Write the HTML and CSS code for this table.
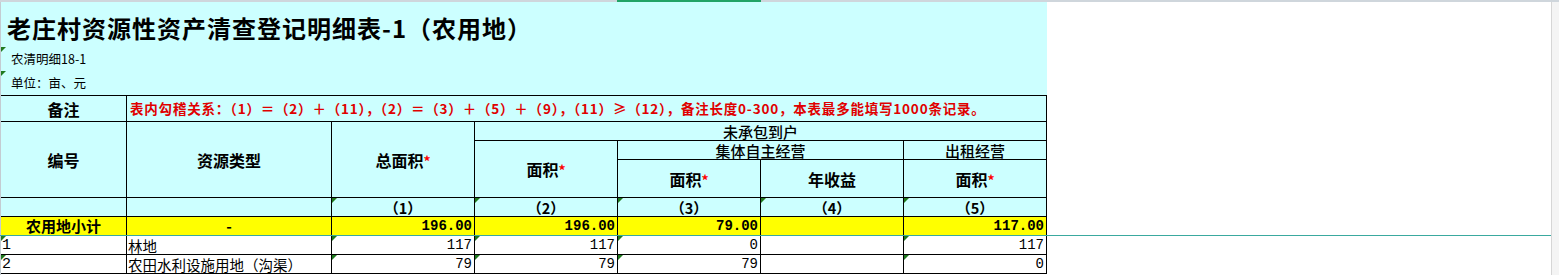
FILE: index.html
```html
<!DOCTYPE html>
<html lang="zh-CN">
<head>
<meta charset="utf-8">
<title>老庄村资源性资产清查登记明细表</title>
<link rel="stylesheet" href="styles.css">
</head>
<body>
<div class="screen">
  <div class="colbar"><div class="colbar-sel"></div></div>
  <div class="main">
    <div class="sheet">
      <div class="titles">
        <div class="row-title">老庄村资源性资产清查登记明细表-1（农用地）</div>
        <div class="row-sub mark">农清明细18-1</div>
        <div class="row-unit mark">单位：亩、元</div>
      </div>
      <table class="grid">
        <colgroup>
          <col class="w0"><col class="w1"><col class="w2"><col class="w2"><col class="w2"><col class="w2"><col class="w2">
        </colgroup>
        <tbody>
          <tr class="r-note">
            <td class="hd lbl">备注</td>
            <td class="hd note-text" colspan="6">表内勾稽关系：（1）＝（2）＋（11），（2）＝（3）＋（5）＋（9），（11）≥（12），备注长度0-300，本表最多能填写1000条记录。</td>
          </tr>
          <tr class="r-a">
            <td class="hd lbl" rowspan="3">编号</td>
            <td class="hd lbl" rowspan="3">资源类型</td>
            <td class="hd lbl" rowspan="3">总面积<span class="star">*</span></td>
            <td class="hd lbl thin" colspan="4">未承包到户</td>
          </tr>
          <tr class="r-b">
            <td class="hd lbl" rowspan="2">面积<span class="star">*</span></td>
            <td class="hd lbl thin" colspan="2">集体自主经营</td>
            <td class="hd lbl thin">出租经营</td>
          </tr>
          <tr class="r-c">
            <td class="hd lbl">面积<span class="star">*</span></td>
            <td class="hd lbl">年收益</td>
            <td class="hd lbl">面积<span class="star">*</span></td>
          </tr>
          <tr class="r-n">
            <td class="hd"></td>
            <td class="hd"></td>
            <td class="hd lbl idx tri">（1）</td>
            <td class="hd lbl idx tri">（2）</td>
            <td class="hd lbl idx tri">（3）</td>
            <td class="hd lbl idx tri">（4）</td>
            <td class="hd lbl idx tri">（5）</td>
          </tr>
          <tr class="r-sum">
            <td class="sum lbl">农用地小计</td>
            <td class="sum lbl">-</td>
            <td class="sum num">196.00</td>
            <td class="sum num">196.00</td>
            <td class="sum num">79.00</td>
            <td class="sum num"></td>
            <td class="sum num">117.00</td>
          </tr>
          <tr class="r-d">
            <td class="cell code tri">1</td>
            <td class="cell txt">林地</td>
            <td class="cell val tri">117</td>
            <td class="cell val tri">117</td>
            <td class="cell val tri">0</td>
            <td class="cell val"></td>
            <td class="cell val tri">117</td>
          </tr>
          <tr class="r-d">
            <td class="cell code tri">2</td>
            <td class="cell txt">农田水利设施用地（沟渠）</td>
            <td class="cell val tri">79</td>
            <td class="cell val tri">79</td>
            <td class="cell val tri">79</td>
            <td class="cell val"></td>
            <td class="cell val tri">0</td>
          </tr>
        </tbody>
      </table>
    </div>
    <div class="scrollbar"></div>
  </div>
  <div class="freeze-line"></div>
</div>
</body>
</html>
```

FILE: styles.css
```css
* { box-sizing: border-box; }
html, body { margin: 0; padding: 0; background: #ffffff; }
body {
  font-family: "Noto Sans CJK SC", "Noto Sans", sans-serif;
  color: #000;
}
.screen {
  width: 1559px;
  height: 275px;
  overflow: hidden;
  position: relative;
}
.colbar {
  height: 2px;
  background: #cfd6dc;
  display: flex;
}
.colbar-sel {
  margin-left: 617px;
  width: 144px;
  background: #21a366;
}
.main {
  display: flex;
  height: 273px;
}
.sheet {
  width: 1551px;
  border-left: 1px solid #c4ccd2;
}
.scrollbar {
  width: 8px;
  background: #f4f4f4;
  border-left: 1px solid #d6d6d6;
}
.titles {
  width: 1046px;
  height: 93px;
  background: #ccffff;
  display: flex;
  flex-direction: column;
}
.row-title {
  height: 45px;
  font-size: 24px;
  font-weight: 700;
  letter-spacing: 1px;
  padding-left: 6px;
  padding-top: 5px;
  display: flex;
  align-items: center;
  white-space: nowrap;
}
.row-sub, .row-unit {
  height: 24px;
  font-size: 12.5px;
  padding-left: 10px;
  padding-bottom: 3px;
  display: flex;
  align-items: flex-end;
  position: relative;
}
.mark::before, .tri::before {
  content: "";
  position: absolute;
  left: 0;
  top: 0;
  border-top: 5px solid #1f7a1f;
  border-right: 5px solid transparent;
}
.grid {
  border-collapse: separate;
  border-spacing: 0;
  table-layout: fixed;
  width: 1046px;
}
.w0 { width: 126px; }
.w1 { width: 205px; }
.w2 { width: 143px; }
.grid td {
  border-right: 1px solid #000;
  border-bottom: 1px solid #000;
  padding: 0;
  line-height: 1;
  white-space: nowrap;
  overflow: hidden;
  position: relative;
}
.r-note td { border-top: 1px solid #000; }
.r-note { height: 27px; }
.r-a { height: 19px; }
.r-b { height: 19px; }
.r-c { height: 38px; }
.r-n { height: 19px; }
.r-sum { height: 19px; }
.r-d { height: 19px; }
.hd { background: #ccffff; }
.lbl {
  text-align: center;
  font-weight: 700;
  font-size: 16px;
}
.grid td.thin {
  font-weight: 500;
  font-size: 15px;
  line-height: 17px;
}
.grid td.idx {
  font-size: 14.5px;
  line-height: 17px;
}
.star { color: #ff0000; font-size: 14px; }
.note-text {
  color: #e00000;
  font-weight: 700;
  font-size: 13.5px;
  letter-spacing: 0.8px;
  padding-left: 3px !important;
}
.sum { background: #ffff00; }
.grid td.sum {
  overflow: visible;
}
.grid td.sum.lbl {
  font-size: 15px;
  line-height: 16px;
}
.num {
  text-align: right;
  font-family: "Liberation Mono", monospace;
  font-weight: 700;
  font-size: 14px;
  padding-right: 2px !important;
}
.cell { background: #ffffff; }
.code {
  font-family: "Liberation Mono", monospace;
  font-size: 15px;
  padding-left: 1px !important;
}
.grid td.txt {
  font-size: 14.5px;
  line-height: 17px;
  padding-left: 1px;
}
.val {
  text-align: right;
  font-family: "Liberation Mono", monospace;
  font-size: 14px;
  padding-right: 2px !important;
}
.freeze-line {
  position: absolute;
  left: 0;
  top: 235px;
  width: 1551px;
  height: 1px;
  background: #3aa99f;
}
```
